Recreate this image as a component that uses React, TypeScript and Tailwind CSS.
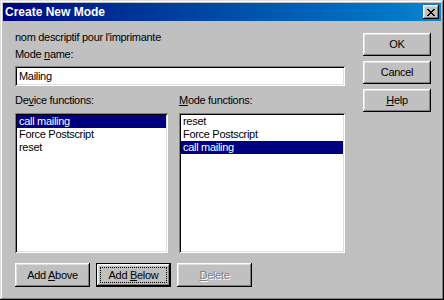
import React from "react";

const font = { fontFamily: '"Liberation Sans", Arial, sans-serif' };

const raised =
  "shadow-[inset_-1px_-1px_0_#000,inset_1px_1px_0_#fff,inset_-2px_-2px_0_#808080,inset_2px_2px_0_#dfdfdf]";
const sunken =
  "shadow-[inset_1px_1px_0_#808080,inset_-1px_-1px_0_#fff,inset_2px_2px_0_#000,inset_-2px_-2px_0_#dfdfdf]";

const Btn = ({
  children,
  className = "",
  disabled = false,
  isDefault = false,
}: {
  children: React.ReactNode;
  className?: string;
  disabled?: boolean;
  isDefault?: boolean;
}) => {
  if (isDefault) {
    return (
      <button className={`bg-black p-px ${className}`}>
        <span className={`flex h-full w-full bg-[#c0c0c0] p-[3px] ${raised}`}>
          <span className="flex flex-1 items-center justify-center border border-dotted border-black text-black">
            <span>{children}</span>
          </span>
        </span>
      </button>
    );
  }
  return (
    <button
      className={`flex items-center justify-center bg-[#c0c0c0] ${raised} ${
        disabled ? "text-[#808080] [text-shadow:1px_1px_0_#fff]" : "text-black"
      } ${className}`}
    >
      <span>{children}</span>
    </button>
  );
};

const ListBox = ({
  items,
  selected,
  className = "",
}: {
  items: string[];
  selected: number;
  className?: string;
}) => (
  <div className={`flex flex-col bg-white p-[2px] ${sunken} ${className}`}>
    {items.map((it, i) => (
      <div
        key={it}
        className={`h-[13px] pl-[2px] leading-[13px] whitespace-nowrap ${
          i === selected ? "bg-[#000080] text-white" : "text-black"
        }`}
      >
        {it}
      </div>
    ))}
  </div>
);

export default function App() {
  return (
    <div
      style={font}
      className="flex h-[300px] w-[444px] flex-col bg-[#c0c0c0] p-[3px] text-[11px] tracking-[-0.3px] text-black shadow-[inset_-1px_-1px_0_#000,inset_1px_1px_0_#dfdfdf,inset_-2px_-2px_0_#808080,inset_2px_2px_0_#fff]"
    >
      {/* title bar */}
      <div className="flex h-[18px] items-center justify-between bg-gradient-to-r from-[#000080] to-[#1084d0] pl-[2px] pr-[2px]">
        <span className="text-[12px] font-bold tracking-normal text-white">Create New Mode</span>
        <button className={`flex h-[14px] w-[16px] items-center justify-center bg-[#c0c0c0] ${raised}`}>
          <svg width="8" height="7" viewBox="0 0 8 7" shapeRendering="crispEdges">
            <path
              d="M0 0h2v1h-2zM6 0h2v1h-2zM1 1h2v1h-2zM5 1h2v1h-2zM2 2h4v1h-4zM3 3h2v1h-2zM2 4h4v1h-4zM1 5h2v1h-2zM5 5h2v1h-2zM0 6h2v1h-2zM6 6h2v1h-2z"
              fill="#000"
            />
          </svg>
        </button>
      </div>

      <div className="flex pl-[12px]">
        {/* left column */}
        <div className="flex w-[330px] flex-col">
          <div className="mt-[10px] h-[13px] leading-[13px]">nom descriptif pour l'imprimante</div>
          <div className="mt-[4px] h-[13px] leading-[13px]">
            Mode <span className="underline">n</span>ame:
          </div>
          <div className={`mt-[5px] flex h-[20px] items-center bg-white pl-[4px] ${sunken}`}>Mailing</div>

          <div className="mt-[8px] flex gap-[11px]">
            <div className="flex w-[153px] flex-col gap-[6px]">
              <div className="h-[13px] leading-[13px]">
                De<span className="underline">v</span>ice functions:
              </div>
              <ListBox
                className="h-[140px]"
                items={["call mailing", "Force Postscript", "reset"]}
                selected={0}
              />
            </div>
            <div className="flex w-[166px] flex-col gap-[6px]">
              <div className="h-[13px] leading-[13px]">
                <span className="underline">M</span>ode functions:
              </div>
              <ListBox
                className="h-[140px]"
                items={["reset", "Force Postscript", "call mailing"]}
                selected={2}
              />
            </div>
          </div>

          <div className="mt-[10px] flex gap-[6px]">
            <Btn className="h-[24px] w-[75px]">
              Add <span className="underline">A</span>bove
            </Btn>
            <Btn isDefault className="h-[24px] w-[75px]">
              Add <span className="underline">B</span>elow
            </Btn>
            <Btn disabled className="h-[24px] w-[75px]">
              <span className="underline">D</span>elete
            </Btn>
          </div>
        </div>

        {/* right column */}
        <div className="ml-[18px] mt-[12px] flex flex-col gap-[5px]">
          <Btn className="h-[23px] w-[68px]">OK</Btn>
          <Btn className="h-[23px] w-[68px]">Cancel</Btn>
          <Btn className="h-[23px] w-[68px]">
            <span className="underline">H</span>elp
          </Btn>
        </div>
      </div>
    </div>
  );
}
